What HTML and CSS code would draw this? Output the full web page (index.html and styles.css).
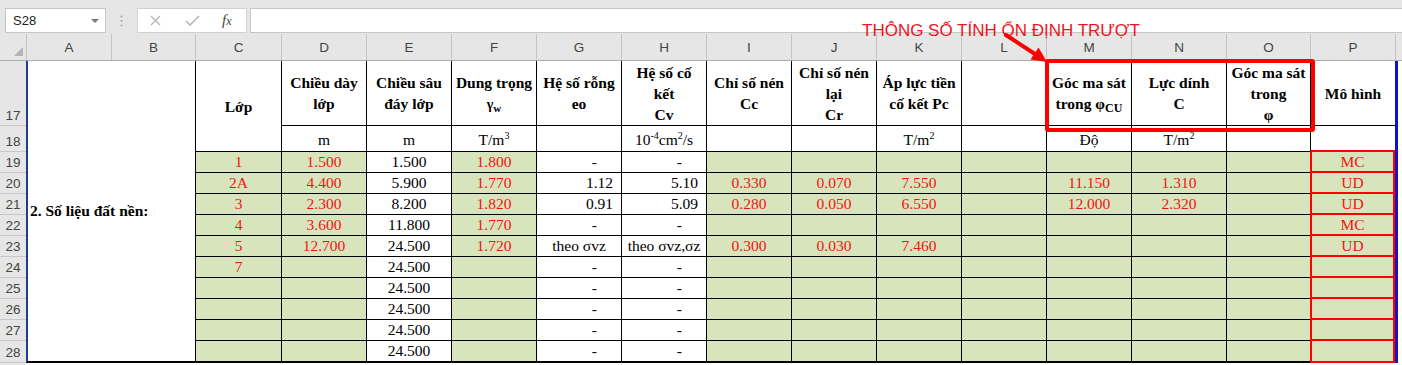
FILE: index.html
```html
<!DOCTYPE html>
<html lang="vi">
<head>
<meta charset="utf-8">
<title>Số liệu đất nền</title>
<link rel="stylesheet" href="styles.css">
</head>
<body>
<div class="toolbar">
  <div class="namebox"><span>S28</span><span class="caret"></span></div>
  <div class="sep"><svg width="3" height="12" viewBox="0 0 3 12"><circle cx="1.5" cy="1.5" r="1" fill="#a8a8a8"/><circle cx="1.5" cy="6" r="1" fill="#a8a8a8"/><circle cx="1.5" cy="10.5" r="1" fill="#a8a8a8"/></svg></div>
  <div class="fbox">
    <svg class="ic-x" width="11" height="11" viewBox="0 0 11 11"><path d="M1 1 L10 10 M10 1 L1 10" stroke="#b4b4b4" stroke-width="1.3" fill="none"/></svg>
    <svg class="ic-ok" width="15" height="11" viewBox="0 0 15 11"><path d="M1 6 L5 10 L14 1" stroke="#b4b4b4" stroke-width="1.5" fill="none"/></svg>
    <span class="fx">f<span>x</span></span>
  </div>
  <div class="finput"></div>
</div>

<div class="colhead">
  <div class="corner"><svg width="26" height="26" viewBox="0 0 26 26"><polygon points="23,13 23,22 14,22" fill="#b4b4b4"/></svg></div>
  <div>A</div><div>B</div><div>C</div><div>D</div><div>E</div><div>F</div><div>G</div><div>H</div><div>I</div><div>J</div><div>K</div><div>L</div><div>M</div><div>N</div><div>O</div><div>P</div><div></div>
</div>

<div class="sheet">
  <div class="ab">2. Số liệu đất nền:</div>
  <div class="q"></div>

  <div class="rh">17</div>
  <div class="c h span2"><span>Lớp</span></div>
  <div class="c h"><span>Chiều dày<br>lớp</span></div>
  <div class="c h"><span>Chiều sâu<br>đáy lớp</span></div>
  <div class="c h"><span>Dung trọng<br><span class="gam">γ<sub>w</sub></span></span></div>
  <div class="c h"><span>Hệ số rỗng<br>eo</span></div>
  <div class="c h"><span>Hệ số cố<br>kết<br>Cv</span></div>
  <div class="c h"><span>Chỉ số nén<br>Cc</span></div>
  <div class="c h"><span>Chỉ số nén<br>lại<br>Cr</span></div>
  <div class="c h"><span>Áp lực tiền<br>cố kết Pc</span></div>
  <div class="c h"></div>
  <div class="c h"><span>Góc ma sát<br>trong φ<sub class="cu">CU</sub></span></div>
  <div class="c h"><span>Lực dính<br>C</span></div>
  <div class="c h"><span>Góc ma sát<br>trong<br>φ</span></div>
  <div class="c h"><span>Mô hình</span></div>

  <div class="rh">18</div>
  <div class="c u"><span>m</span></div>
  <div class="c u"><span>m</span></div>
  <div class="c u"><span>T/m<sup>3</sup></span></div>
  <div class="c u"></div>
  <div class="c u"><span>10<sup>-4</sup>cm<sup>2</sup>/s</span></div>
  <div class="c u"></div>
  <div class="c u"></div>
  <div class="c u"><span>T/m<sup>2</sup></span></div>
  <div class="c u"></div>
  <div class="c u"><span>Độ</span></div>
  <div class="c u"><span>T/m<sup>2</sup></span></div>
  <div class="c u"></div>
  <div class="c u p18"></div>

  <div class="rh">19</div>
  <div class="c g r">1</div>
  <div class="c g r">1.500</div>
  <div class="c">1.500</div>
  <div class="c g r">1.800</div>
  <div class="c dash">-</div>
  <div class="c dash">-</div>
  <div class="c g"></div><div class="c g"></div><div class="c g"></div><div class="c g"></div><div class="c g"></div><div class="c g"></div><div class="c g"></div>
  <div class="c g r p">MC</div>

  <div class="rh">20</div>
  <div class="c g r">2A</div>
  <div class="c g r">4.400</div>
  <div class="c">5.900</div>
  <div class="c g r">1.770</div>
  <div class="c num">1.12</div>
  <div class="c num">5.10</div>
  <div class="c g r">0.330</div>
  <div class="c g r">0.070</div>
  <div class="c g r">7.550</div>
  <div class="c g"></div>
  <div class="c g r">11.150</div>
  <div class="c g r">1.310</div>
  <div class="c g"></div>
  <div class="c g r p">UD</div>

  <div class="rh">21</div>
  <div class="c g r">3</div>
  <div class="c g r">2.300</div>
  <div class="c">8.200</div>
  <div class="c g r">1.820</div>
  <div class="c num">0.91</div>
  <div class="c num">5.09</div>
  <div class="c g r">0.280</div>
  <div class="c g r">0.050</div>
  <div class="c g r">6.550</div>
  <div class="c g"></div>
  <div class="c g r">12.000</div>
  <div class="c g r">2.320</div>
  <div class="c g"></div>
  <div class="c g r p">UD</div>

  <div class="rh">22</div>
  <div class="c g r">4</div>
  <div class="c g r">3.600</div>
  <div class="c">11.800</div>
  <div class="c g r">1.770</div>
  <div class="c dash">-</div>
  <div class="c dash">-</div>
  <div class="c g"></div><div class="c g"></div><div class="c g"></div><div class="c g"></div><div class="c g"></div><div class="c g"></div><div class="c g"></div>
  <div class="c g r p">MC</div>

  <div class="rh">23</div>
  <div class="c g r">5</div>
  <div class="c g r">12.700</div>
  <div class="c">24.500</div>
  <div class="c g r">1.720</div>
  <div class="c">theo σvz</div>
  <div class="c">theo σvz,σz</div>
  <div class="c g r">0.300</div>
  <div class="c g r">0.030</div>
  <div class="c g r">7.460</div>
  <div class="c g"></div><div class="c g"></div><div class="c g"></div><div class="c g"></div>
  <div class="c g r p">UD</div>

  <div class="rh">24</div>
  <div class="c g r">7</div>
  <div class="c g"></div>
  <div class="c">24.500</div>
  <div class="c g"></div>
  <div class="c dash">-</div>
  <div class="c dash">-</div>
  <div class="c g"></div><div class="c g"></div><div class="c g"></div><div class="c g"></div><div class="c g"></div><div class="c g"></div><div class="c g"></div>
  <div class="c g p"></div>

  <div class="rh">25</div>
  <div class="c g"></div><div class="c g"></div>
  <div class="c">24.500</div>
  <div class="c g"></div>
  <div class="c dash">-</div>
  <div class="c dash">-</div>
  <div class="c g"></div><div class="c g"></div><div class="c g"></div><div class="c g"></div><div class="c g"></div><div class="c g"></div><div class="c g"></div>
  <div class="c g p"></div>

  <div class="rh">26</div>
  <div class="c g"></div><div class="c g"></div>
  <div class="c">24.500</div>
  <div class="c g"></div>
  <div class="c dash">-</div>
  <div class="c dash">-</div>
  <div class="c g"></div><div class="c g"></div><div class="c g"></div><div class="c g"></div><div class="c g"></div><div class="c g"></div><div class="c g"></div>
  <div class="c g p"></div>

  <div class="rh">27</div>
  <div class="c g"></div><div class="c g"></div>
  <div class="c">24.500</div>
  <div class="c g"></div>
  <div class="c dash">-</div>
  <div class="c dash">-</div>
  <div class="c g"></div><div class="c g"></div><div class="c g"></div><div class="c g"></div><div class="c g"></div><div class="c g"></div><div class="c g"></div>
  <div class="c g p"></div>

  <div class="rh">28</div>
  <div class="c g lr"></div><div class="c g lr"></div>
  <div class="c lr">24.500</div>
  <div class="c g lr"></div>
  <div class="c dash lr">-</div>
  <div class="c dash lr">-</div>
  <div class="c g lr"></div><div class="c g lr"></div><div class="c g lr"></div><div class="c g lr"></div><div class="c g lr"></div><div class="c g lr"></div><div class="c g lr"></div>
  <div class="c g p lr"></div>
</div>
<div class="tail"><div class="tail-rh"></div></div>

<div class="note">THÔNG SỐ TÍNH ỔN ĐỊNH TRƯỢT</div>
<svg class="arrow" width="52" height="36" viewBox="1000 30 52 36">
  <line x1="1006" y1="35" x2="1035" y2="54" stroke="#ff0000" stroke-width="4" stroke-linecap="round"/>
  <polygon points="1047,62 1030.5,59.5 1038.5,47.5" fill="#ff0000"/>
</svg>
<div class="redbox"></div>
</body>
</html>
```

FILE: styles.css
```css
* { box-sizing: border-box; margin: 0; padding: 0; }

body {
  margin: 0;
  width: 1402px;
  height: 365px;
  overflow: hidden;
  position: relative;
  background: #ffffff;
  font-family: "Liberation Serif", "Times New Roman", serif;
}

/* ---------- formula bar ---------- */
.toolbar {
  height: 34px;
  background: #e6e6e6;
  display: flex;
  align-items: flex-start;
  padding: 8px 0 0 5px;
}
.namebox {
  width: 101px;
  height: 25px;
  background: #fff;
  border: 1px solid #c6c6c6;
  display: flex;
  align-items: center;
  justify-content: space-between;
  padding: 0 6px 0 7px;
  font-family: "Liberation Sans", Arial, sans-serif;
  font-size: 13px;
  color: #222;
}
.caret {
  width: 0; height: 0;
  border-left: 4px solid transparent;
  border-right: 4px solid transparent;
  border-top: 4px solid #7a7a7a;
}
.sep {
  width: 31px;
  height: 25px;
  display: flex;
  align-items: center;
  justify-content: center;
}
.fbox {
  width: 110px;
  height: 25px;
  background: #fff;
  border: 1px solid #d0d0d0;
  display: flex;
  align-items: center;
  padding-left: 12px;
}
.ic-ok { margin-left: 24px; }
.fx {
  margin-left: 22px;
  font-family: "Liberation Serif", serif;
  font-style: italic;
  font-size: 15px;
  color: #444;
}
.fx span { font-size: 12px; }
.finput {
  flex: 1;
  margin-left: 3px;
  height: 25px;
  background: #fff;
  border: 1px solid #c6c6c6;
  border-right: none;
}

/* ---------- column headers ---------- */
.colhead, .sheet {
  display: grid;
  grid-template-columns: 26px 85px 84px 86px repeat(10, 85px) 95px 84px 85px 7px;
}
.colhead {
  height: 27px;
  background: #e6e6e6;
  border-bottom: 1px solid #ababab;
}
.colhead > div {
  border-left: 1px solid #c4c4c4;
  display: flex;
  align-items: center;
  justify-content: center;
  padding-top: 1px;
  font-family: "Liberation Sans", Arial, sans-serif;
  font-size: 13.5px;
  color: #444;
}
.colhead > .corner { border-left: none; padding: 0; }

/* ---------- sheet ---------- */
.sheet {
  grid-template-rows: 65px 26px repeat(9, 21px) 22px;
  font-size: 15.5px;
  color: #000;
}
.rh {
  grid-column: 1;
  background: #e6e6e6;
  border-bottom: 1px solid #c8c8c8;
  display: flex;
  align-items: flex-end;
  justify-content: center;
  padding-bottom: 2px;
  line-height: 15px;
  font-family: "Liberation Sans", Arial, sans-serif;
  font-size: 13.5px;
  color: #444;
}
.ab {
  grid-column: 2 / 4;
  grid-row: 1 / 13;
  border-left: 2px solid #24389a;
  border-bottom: 2px solid #000;
  display: flex;
  align-items: center;
  padding-left: 2px;
  font-weight: bold;
  white-space: nowrap;
}
.q {
  grid-column: 18 / 19;
  grid-row: 1 / 13;
  border-left: 3px solid #1212c4;
}
.c {
  border-left: 1px solid #000;
  border-bottom: 1px solid #000;
  display: flex;
  align-items: center;
  justify-content: center;
  text-align: center;
  white-space: nowrap;
  line-height: 20px;
}
.h {
  font-weight: bold;
  line-height: 21px;
}
.u { padding-top: 2px; }
.span2 { grid-row: span 2; }
.g { background: #d8e4bc; }
.r { color: #f01414; }
.num { justify-content: flex-end; padding-right: 8px; }
.dash { justify-content: flex-end; padding-right: 24px; }
.lr { border-bottom-width: 2px; }
.p {
  border-left: 2px solid #ff0000;
  border-right: 2px solid #ff0000;
  border-bottom: 2px solid #ff0000;
}
.p18 { border-bottom: 2px solid #ff0000; }

sup {
  font-size: 10px;
  line-height: 0;
  vertical-align: 6px;
}
sub {
  font-size: 11px;
  line-height: 0;
  vertical-align: -3px;
}
.cu { font-size: 12px; }
.gam { font-size: 14px; }

.tail {
  height: 4px;
  display: flex;
}
.tail-rh { width: 26px; background: #e6e6e6; }

/* ---------- annotations ---------- */
.note {
  position: absolute;
  left: 862px;
  top: 22px;
  font-family: "Liberation Sans", Arial, sans-serif;
  font-size: 17px;
  line-height: 17px;
  color: #f0141e;
  white-space: nowrap;
}
.arrow {
  position: absolute;
  left: 1000px;
  top: 30px;
}
.redbox {
  position: absolute;
  left: 1045px;
  top: 59px;
  width: 270px;
  height: 73px;
  border: 4px solid #ff0000;
  border-radius: 3px;
}
```
